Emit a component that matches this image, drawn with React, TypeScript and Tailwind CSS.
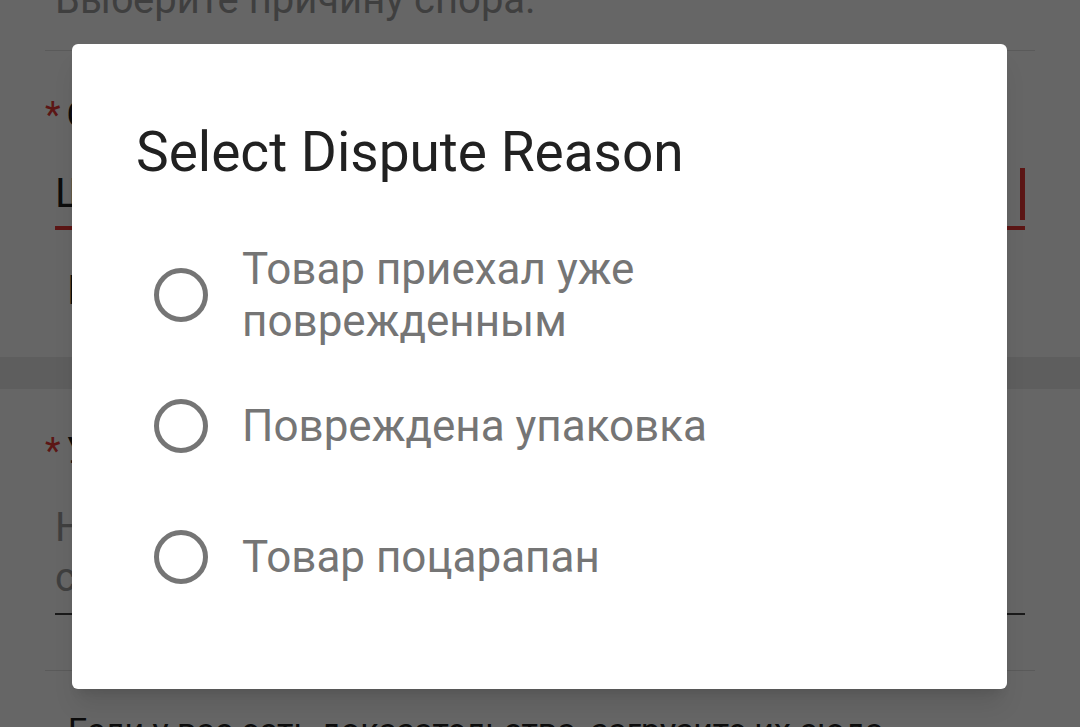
import { useState } from "react";

const reasons = ["Товар приехал уже поврежденным", "Повреждена упаковка", "Товар поцарапан"];

const Radio = ({ checked }: { checked: boolean }) => (
  <span className="flex h-[54px] w-[54px] shrink-0 items-center justify-center rounded-full border-[5px] border-[#757575]">
    {checked && <span className="h-[26px] w-[26px] rounded-full bg-[#757575]" />}
  </span>
);

export default function App() {
  const [selected, setSelected] = useState<number | null>(null);

  return (
    <div className="relative h-[727px] w-[1080px] overflow-hidden bg-white font-['Roboto',sans-serif]">
      {/* page behind the dialog */}
      <div className="flex flex-col">
        <div className="mx-[45px] h-[51px] border-b border-[#e0e0e0] pl-[10px]">
          <p className="-mt-[26px] text-[40px] leading-[52px] text-[#9e9e9e]">Выберите причину спора.</p>
        </div>
        <div className="flex h-[306px] flex-col px-[45px] pt-[42px]">
          <p className="flex text-[36px] leading-[44px] text-[#212121]">
            <span className="mr-[6px] text-[#e53935]">*</span>Суть спора
          </p>
          <div className="mx-[10px] mt-[29px] flex h-[64px] items-end justify-between border-b-4 border-[#e53935]">
            <span className="pb-[8px] text-[40px] leading-[48px] text-[#212121]">Ш</span>
            <span className="mb-[6px] h-[52px] w-[5px] bg-[#e53935]" />
          </div>
          <p className="mt-[37px] pl-[22px] text-[40px] leading-[48px] text-[#212121]">I</p>
        </div>
        <div className="h-[32px] bg-[#ececec]" />
        <div className="flex h-[279px] flex-col px-[45px] pt-[40px]">
          <p className="flex text-[36px] leading-[44px] text-[#212121]">
            <span className="mr-[6px] text-[#e53935]">*</span>Укажите подробности
          </p>
          <div className="mx-[10px] mt-[30px] border-b-2 border-[#424242] pb-[10px] text-[40px] leading-[50px] text-[#9e9e9e]">
            <p>Напишите подробности</p>
            <p>своего спора</p>
          </div>
          <div className="mt-[55px] border-b border-[#e0e0e0]" />
        </div>
        <p className="px-[68px] pt-[40px] text-[34px] leading-[44px] text-[#212121]">
          Если у вас есть доказательства, загрузите их сюда
        </p>
      </div>

      {/* scrim */}
      <div className="absolute inset-0 bg-black/60" />

      {/* dialog */}
      <div className="absolute left-[72px] top-[44px] h-[645px] w-[935px] rounded-[6px] bg-white px-[64px] pt-[75px] shadow-xl">
        <h2 className="text-[55px] leading-[66px] text-[#212121]">Select Dispute Reason</h2>
        <ul className="mt-[44px] flex flex-col">
          {reasons.map((reason, i) => (
            <li
              key={reason}
              onClick={() => setSelected(i)}
              className="flex min-h-[131px] cursor-pointer items-center gap-[34px] pl-[18px]"
            >
              <Radio checked={selected === i} />
              <span className="text-[44px] leading-[52px] text-[#757575]">{reason}</span>
            </li>
          ))}
        </ul>
      </div>
    </div>
  );
}
